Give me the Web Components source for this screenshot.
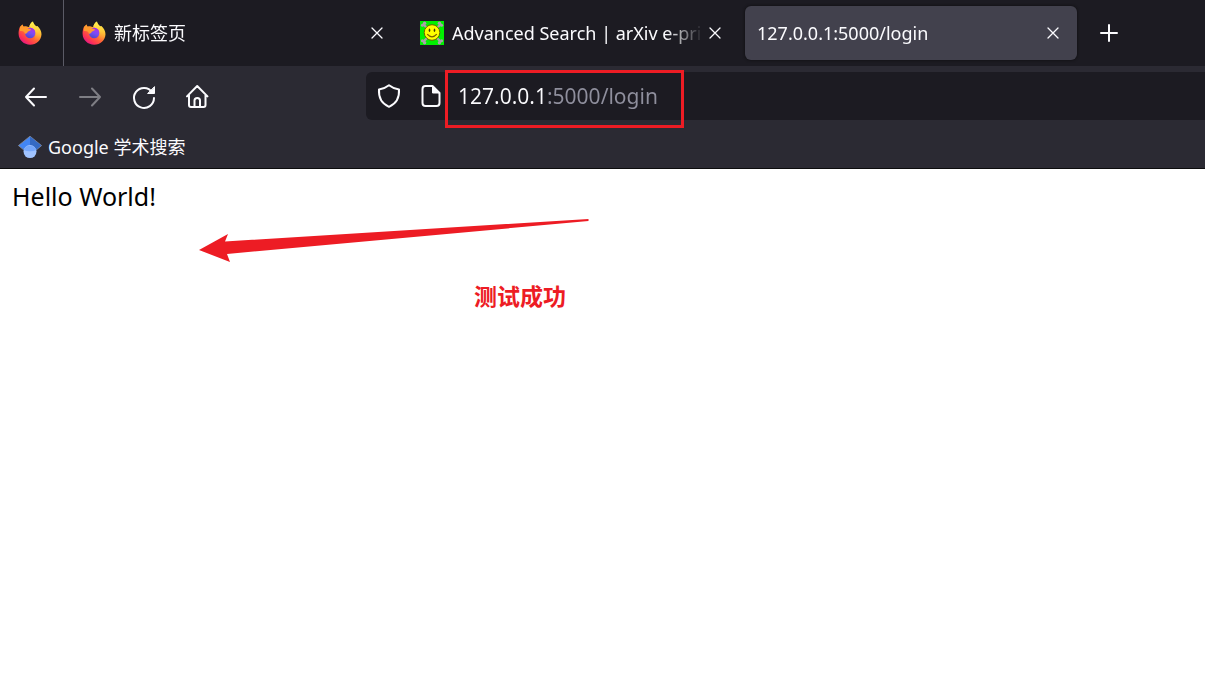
<!DOCTYPE html>
<html lang="zh-CN">
<head>
<meta charset="utf-8">
<title>127.0.0.1:5000/login</title>
<style>
  html, body { margin: 0; min-height: 100%; background: #fff; }
  body { font-family: "Noto Sans", "Noto Sans CJK SC", sans-serif; font-size: 18px; line-height: 24px; }
</style>
</head>
<body>
<browser-window>
  <tab-strip slot="chrome">
    <browser-tab pinned><fox-icon slot="icon"></fox-icon></browser-tab>
    <browser-tab><fox-icon slot="icon"></fox-icon>新标签页</browser-tab>
    <browser-tab><smiley-icon slot="icon"></smiley-icon>Advanced Search | arXiv e-print</browser-tab>
    <browser-tab active>127.0.0.1:5000/login</browser-tab>
  </tab-strip>
  <nav-bar slot="chrome"><url-bar></url-bar></nav-bar>
  <bookmark-bar slot="chrome"><scholar-icon slot="icon"></scholar-icon>Google 学术搜索</bookmark-bar>
  <page-view>Hello World!<page-note slot="note">测试成功</page-note></page-view>
</browser-window>

<script>
const define = (name, html) => {
  const t = document.createElement('template');
  t.innerHTML = html;
  customElements.define(name, class extends HTMLElement {
    constructor() {
      super();
      this.attachShadow({ mode: 'open' }).append(t.content.cloneNode(true));
    }
  });
};

const buttonReset = `button { border: 0; margin: 0; padding: 0; background: none; color: inherit; font: inherit; display: flex; align-items: center; justify-content: center; } svg { display: block; }`;

define('fox-icon', `
<style>:host { display: block; flex: none; width: 24px; height: 24px; } svg { display: block; }</style>
<svg width="24" height="24" viewBox="0 0 24 24" aria-hidden="true">
  <defs>
    <linearGradient id="b" x1="0.85" y1="0.1" x2="0.2" y2="0.95">
      <stop offset="0" stop-color="#fff44f"/><stop offset=".3" stop-color="#ffb432"/><stop offset=".55" stop-color="#ff6a35"/><stop offset=".8" stop-color="#ff3750"/><stop offset="1" stop-color="#e31587"/>
    </linearGradient>
    <linearGradient id="y" x1="0.5" y1="0" x2="0.5" y2="1">
      <stop offset="0" stop-color="#fff44f"/><stop offset=".5" stop-color="#ffcb3a"/><stop offset="1" stop-color="#ff8a30" stop-opacity="0"/>
    </linearGradient>
    <linearGradient id="p" x1="0.7" y1="0" x2="0.3" y2="1">
      <stop offset="0" stop-color="#b833e1"/><stop offset=".5" stop-color="#7a4cf5"/><stop offset="1" stop-color="#4b49c8"/>
    </linearGradient>
  </defs>
  <path fill="url(#b)" d="M2 5.8 3.4 5 4.3 3.6 5.6 5.8 8 5.2C9 5.2 10.4 6 11.4 6 11.4 4 12.8 1.6 15 .4 15 2.4 16.5 3.6 18.1 5.2L19.4 5C21.8 7.2 23.5 10.4 23.5 13.2 23.2 19.2 18.4 23.7 12.2 23.7 5.8 23.7.8 19 .6 13 .5 10.4 1 7.8 2 5.8Z"/>
  <path fill="url(#y)" d="M11.4 6C11.4 4 12.8 1.6 15 .4 15 2.4 16.5 3.6 18.1 5.2 20.6 7.6 22.4 10.5 21.8 14 21 18 18.5 20 15 20 17.5 17.8 18 13.8 16.8 11 15.8 8.8 13.8 7.2 11.4 6Z"/>
  <circle cx="12.2" cy="12" r="5.2" fill="url(#p)"/>
  <path fill="#9b35e8" d="M9.8 7.5C12 6 15.8 7 17 10.4 15.2 8.8 12.7 8.5 11 9.2Z"/>
  <path fill="#ff9a2e" d="M2 6 4.3 3.6 5.6 5.8C7.4 5.1 9.3 5.8 10.2 7.6L13 8.2C13 9.8 10.6 9.7 9.8 10.7 9.4 12.1 8.2 12.3 7 12.9 6.6 10.7 5.3 9.7 2 10Z"/>
</svg>`);

define('smiley-icon', `
<style>:host { display: block; flex: none; width: 24px; height: 24px; } svg { display: block; }</style>
<svg width="24" height="24" viewBox="0 0 24 24" aria-hidden="true">
  <path fill="#00f000" d="M0 0H24V24H0Z"/>
  <g stroke="#a9a1a9" stroke-width="2.4" stroke-linecap="round"><path d="M3.5 3.5 20.5 20.5M20.5 3.5 3.5 20.5"/></g>
  <g fill="#a9a1a9"><circle cx="4.6" cy="2.2" r="1.7"/><circle cx="2.4" cy="4.2" r="1.5"/><circle cx="19.4" cy="2.2" r="1.7"/><circle cx="21.6" cy="4.2" r="1.5"/><circle cx="4.6" cy="21.8" r="1.7"/><circle cx="2.4" cy="19.8" r="1.5"/><circle cx="19.4" cy="21.8" r="1.7"/><circle cx="21.6" cy="19.8" r="1.5"/></g>
  <circle cx="12" cy="11.5" r="7.8" fill="#ff0" stroke="#6b6200" stroke-width="1"/>
  <g fill="#3b3600"><ellipse cx="9.5" cy="9.2" rx="0.8" ry="1.8"/><ellipse cx="14.5" cy="9.2" rx="0.8" ry="1.8"/></g>
  <path d="M7.2 13.2Q12 18.6 16.8 13.2" fill="none" stroke="#7a5c00" stroke-width="1.2"/>
</svg>`);

define('scholar-icon', `
<style>:host { display: block; flex: none; width: 24px; height: 24px; } svg { display: block; }</style>
<svg width="24" height="24" viewBox="0 0 24 24" aria-hidden="true">
  <path fill="#4285f4" stroke="#8b8b93" stroke-width=".8" d="M12 1.2 23.6 10.6 17 16H7L.4 10.6Z"/>
  <path fill="#356ac3" d="M12 1.6 23.2 10.6 16 16.4 12 12Z"/>
  <circle cx="12" cy="16.6" r="6.5" fill="#a0c3ff"/>
  <path fill="#76a7fa" d="M5.7 15A6.8 6.8 0 0 1 18.3 15 14 14 0 0 1 12 16.2 14 14 0 0 1 5.7 15Z"/>
</svg>`);

define('browser-window', `
<style>:host { display: flex; flex-direction: column; min-height: 100vh; }
header { background: #2b2a33; color: #fbfbfe; border-bottom: 1px solid #0c0c0d; overflow: hidden; }</style>
<header><slot name="chrome"></slot></header>
<slot></slot>`);

define('tab-strip', `
<style>${buttonReset}
:host { display: flex; align-items: center; height: 66px; background: #1c1b22; }
button { width: 48px; height: 48px; margin-left: 8px; flex: none; }</style>
<slot></slot>
<button type="button" aria-label="New tab"><svg width="20" height="20" viewBox="0 0 20 20" fill="none" stroke="#fbfbfe" stroke-width="2" stroke-linecap="round"><path d="M10 2V18M2 10H18"/></svg></button>`);

define('browser-tab', `
<style>${buttonReset}
:host { display: flex; align-items: center; box-sizing: border-box; flex: 0 1 332px; min-width: 0; height: 54px; margin-left: 6px; padding: 0 12px 0 13px; border-radius: 6px; }
:host([active]) { padding-left: 12px; background: #42414d; box-shadow: 0 0 3px #0c0c0d; }
:host([pinned]) { flex: none; height: 66px; width: 64px; margin: 0 -1px 0 0; padding: 0 18px; border-right: 1px solid #5b5b66; border-radius: 0; }
:host([pinned]) .label, :host([pinned]) button { display: none; }
slot[name=icon]::slotted(*) { margin-right: 8px; }
.label { flex: 1; min-width: 0; overflow: hidden; white-space: nowrap; mask-image: linear-gradient(to left, transparent, #000 36px); }
button { width: 24px; height: 24px; flex: none; }</style>
<slot name="icon"></slot><span class="label"><slot></slot></span>
<button type="button" aria-label="Close tab"><svg width="12" height="12" viewBox="0 0 12 12" stroke="#fbfbfe" stroke-width="1.3" stroke-linecap="round"><path d="M1 1 11 11M11 1 1 11"/></svg></button>`);

define('nav-bar', `
<style>${buttonReset}
:host { display: flex; align-items: center; height: 60px; padding-left: 9px; }
nav { display: flex; width: 357px; flex: none; }
button { width: 54px; height: 48px; }
button:disabled { opacity: .4; }
::slotted(*) { flex: 1; }
svg { overflow: visible; fill: none; stroke: #fbfbfe; stroke-width: 2; stroke-linecap: round; stroke-linejoin: round; }</style>
<nav aria-label="Navigation">
  <button type="button" aria-label="Back"><svg width="24" height="24" viewBox="0 0 24 24"><path d="M10 4.5 2 13 10 21.5M2 13H22"/></svg></button>
  <button type="button" aria-label="Forward" disabled><svg width="24" height="24" viewBox="0 0 24 24"><path d="M14 4.5 22 13 14 21.5M22 13H2"/></svg></button>
  <button type="button" aria-label="Reload"><svg width="24" height="24" viewBox="0 0 24 24"><path d="M20.2 8.2A10 10 0 1 0 22 14"/><path fill="#fbfbfe" stroke-width="1" d="M22.5 3V9.5H16Z"/></svg></button>
  <button type="button" aria-label="Home"><svg width="24" height="24" viewBox="0 0 24 24"><path d="M1 12.4 11.2 2 21.5 12.4M3 11V21Q3 23 5 23H17.5Q19.5 23 19.5 21V11M8.5 22.5V16.5Q8.5 14 11.3 14 14 14 14 16.5V22.5"/></svg></button>
</nav>
<slot></slot>`);

define('url-bar', `
<style>
:host { display: flex; align-items: center; position: relative; height: 48px; padding-left: 11px; background: #1c1b22; border-radius: 6px 0 0 6px; }
svg { display: block; flex: none; margin-right: 18px; fill: none; stroke: #fbfbfe; stroke-width: 2; stroke-linejoin: round; }
svg + svg { margin-right: 15px; }
input { flex: 1; min-width: 0; height: 36px; margin: 0; padding: 0; border: 0; outline: 0; font: 21px/30px "Noto Sans", sans-serif;
  color: #8f8f9d; -webkit-text-fill-color: transparent; background: linear-gradient(to right, #fbfbfe 88px, #8f8f9d 88px); -webkit-background-clip: text; background-clip: text; }
.mark { position: absolute; left: 79px; top: -2px; box-sizing: border-box; width: 239px; height: 58px; border: 3px solid #ed1c24; pointer-events: none; }
</style>
<svg width="24" height="24" viewBox="0 0 24 24" aria-hidden="true"><path d="M12 1.3C14.5 3.3 18.5 5 22 5.4 22.5 12.5 19.5 19.5 12 22.8 4.5 19.5 1.5 12.5 2 5.4 5.5 5 9.5 3.3 12 1.3Z"/></svg>
<svg width="24" height="24" viewBox="0 0 24 24" aria-hidden="true"><path d="M13.5 2H6.5Q3.5 2 3.5 5V19Q3.5 22 6.5 22H17.5Q20.5 22 20.5 19V9Z"/><path fill="#fbfbfe" stroke-width="1" d="M13.5 2V9H20.5Z"/></svg>
<input type="text" aria-label="Address" value="127.0.0.1:5000/login" spellcheck="false">
<span class="mark"></span>`);

define('bookmark-bar', `
<style>:host { display: flex; align-items: center; height: 42px; padding-left: 18px; }
a { display: flex; align-items: center; gap: 6px; color: inherit; text-decoration: none; }</style>
<a href="#scholar"><slot name="icon"></slot><span><slot></slot></span></a>`);

define('page-view', `
<style>:host { display: block; position: relative; flex: 1; padding: 10px 12px; color: #000; font-size: 25px; line-height: 34px; }
main { display: block; }
svg { position: absolute; left: 198px; top: 48px; }</style>
<main><slot></slot></main>
<svg width="394" height="48" viewBox="198 217 394 48" aria-hidden="true"><path fill="#ed1c24" d="M199 250 228 234 225 241.5 588.5 219V221L227 254 230 262Z"/></svg>
<slot name="note"></slot>`);

define('page-note', `
<style>:host { display: block; position: absolute; left: 474px; top: 111px; color: #ed1c24; font-size: 23px; line-height: 32px; font-weight: 700; white-space: nowrap; }</style>
<slot></slot>`);
</script>
</body>
</html>
